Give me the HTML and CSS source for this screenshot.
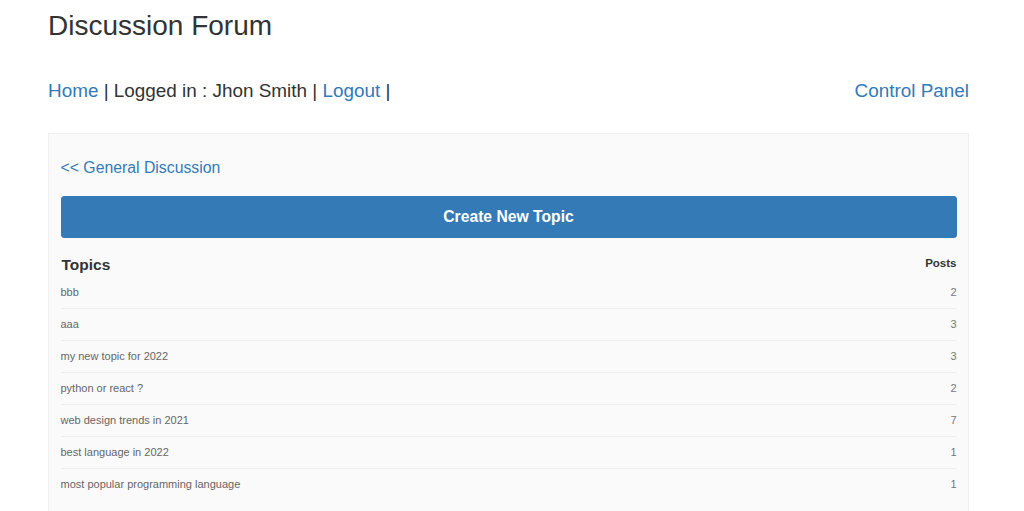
FILE: index.html
```html
<!DOCTYPE html>
<html lang="en">
<head>
<meta charset="utf-8">
<title>Discussion Forum</title>
<link rel="stylesheet" href="styles.css">
</head>
<body>
<div class="container">
  <h1 class="title">Discussion Forum</h1>
  <nav class="nav">
    <div class="nav-left"><a href="#">Home</a> | Logged in : Jhon Smith | <a href="#">Logout</a> |</div>
    <a class="nav-right" href="#">Control Panel</a>
  </nav>
  <div class="panel">
    <a class="back" href="#">&lt;&lt; General Discussion</a>
    <button class="btn" type="button">Create New Topic</button>
    <div class="head">
      <span class="head-topics">Topics</span>
      <span class="head-posts">Posts</span>
    </div>
    <ul class="rows">
      <li class="row"><span>bbb</span><span>2</span></li>
      <li class="row"><span>aaa</span><span>3</span></li>
      <li class="row"><span>my new topic for 2022</span><span>3</span></li>
      <li class="row"><span>python or react ?</span><span>2</span></li>
      <li class="row"><span>web design trends in 2021</span><span>7</span></li>
      <li class="row"><span>best language in 2022</span><span>1</span></li>
      <li class="row"><span>most popular programming language</span><span>1</span></li>
    </ul>
  </div>
</div>
</body>
</html>
```

FILE: styles.css
```css
html, body {
  margin: 0;
  padding: 0;
  background: #fff;
}
body {
  font-family: "Liberation Sans", Arial, sans-serif;
  color: #333;
  overflow: hidden;
}
a {
  color: #337ab7;
  text-decoration: none;
}
.container {
  width: 921px;
  margin-left: 48px;
  padding-top: 11px;
}
.title {
  margin: 0;
  font-size: 28px;
  line-height: 30.8px;
  font-weight: normal;
  color: #333;
}
.nav {
  margin-top: 35px;
  display: flex;
  justify-content: space-between;
  font-size: 18.9px;
  line-height: 27px;
  color: #333;
}
.panel {
  margin-top: 29px;
  background: #fafafa;
  border: 1px solid #f0f0f0;
  padding: 0 11.5px 20px;
  min-height: 400px;
}
.back {
  display: block;
  margin-top: 23px;
  font-size: 15.8px;
  line-height: 22px;
}
.btn {
  display: block;
  width: 100%;
  height: 42px;
  margin-top: 17px;
  background: #337ab7;
  border: 1px solid #337ab7;
  border-radius: 3px;
  color: #fff;
  font-family: "Liberation Sans", Arial, sans-serif;
  font-weight: bold;
  font-size: 15.7px;
  padding: 0;
}
.head {
  margin-top: 17px;
  display: flex;
  justify-content: space-between;
  align-items: flex-start;
}
.head-topics {
  font-weight: bold;
  font-size: 15.5px;
  line-height: 20px;
  padding-left: 1px;
}
.head-posts {
  font-weight: bold;
  font-size: 11.5px;
  line-height: 16px;
}
.rows {
  list-style: none;
  margin: 2px 0 0;
  padding: 0;
}
.row {
  display: flex;
  justify-content: space-between;
  font-size: 11px;
  line-height: 31px;
  color: #666;
  border-bottom: 1px solid #eeeeee;
}
.row:last-child {
  border-bottom: none;
}
.row span:last-child {
  color: #777;
}
```
